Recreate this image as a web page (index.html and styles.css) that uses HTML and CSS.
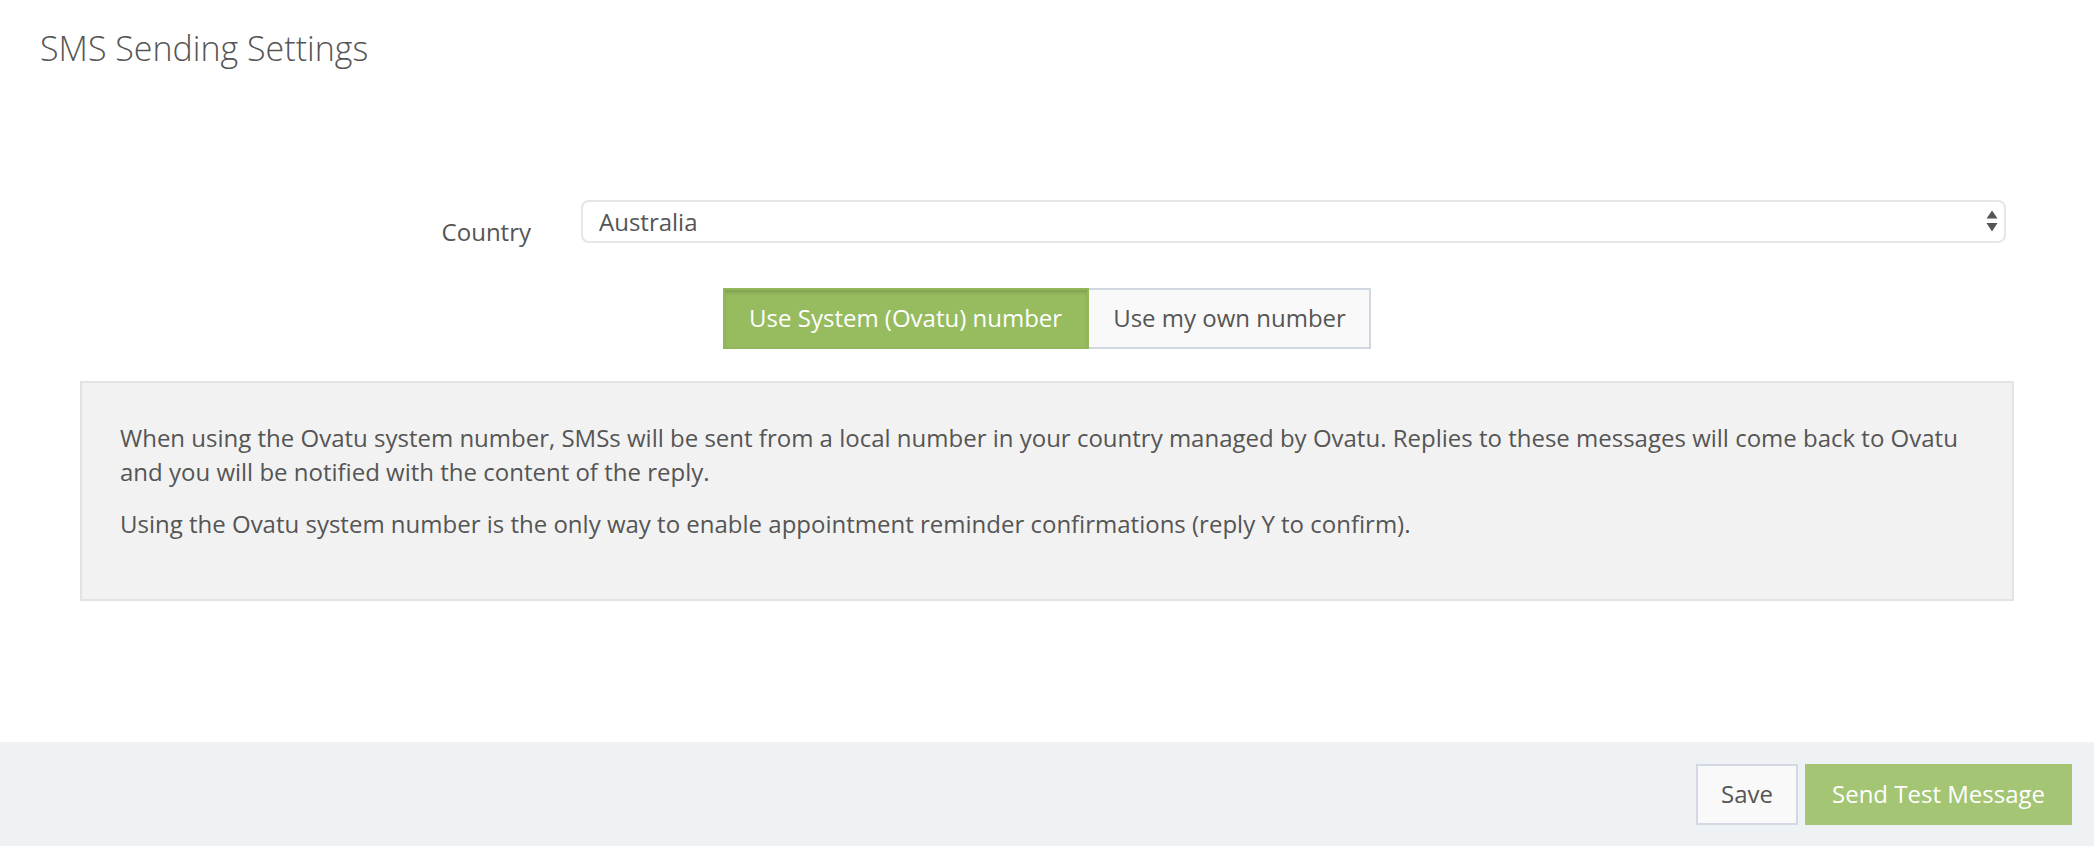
FILE: index.html
```html
<!DOCTYPE html>
<html lang="en">
<head>
<meta charset="utf-8">
<title>SMS Sending Settings</title>
<link rel="stylesheet" href="styles.css">
</head>
<body>
<div class="page">
  <header class="page-header">
    <h1 class="page-title">SMS Sending Settings</h1>
  </header>
  <main class="content">
    <div class="form-row">
      <label class="form-label" for="country">Country</label>
      <div class="select-wrap">
        <select id="country" class="form-select">
          <option>Australia</option>
        </select>
        <svg class="select-arrows" width="12" height="22" viewBox="0 0 12 22" aria-hidden="true">
          <polygon points="6,0.5 11.5,8.5 0.5,8.5" fill="#555"/>
          <polygon points="0.5,13 11.5,13 6,21.5" fill="#555"/>
        </svg>
      </div>
    </div>
    <div class="toggle-row">
      <div class="toggle-group">
        <button class="toggle-btn is-active" type="button">Use System (Ovatu) number</button>
        <button class="toggle-btn" type="button">Use my own number</button>
      </div>
    </div>
    <div class="well">
      <p>When using the Ovatu system number, SMSs will be sent from a local number in your country managed by Ovatu. Replies to these messages will come back to Ovatu and you will be notified with the content of the reply.</p>
      <p>Using the Ovatu system number is the only way to enable appointment reminder confirmations (reply Y to confirm).</p>
    </div>
  </main>
  <footer class="footer">
    <button class="btn btn-default" type="button">Save</button>
    <button class="btn btn-primary" type="button">Send Test Message</button>
  </footer>
</div>
</body>
</html>
```

FILE: styles.css
```css
* {
  box-sizing: border-box;
}

html, body {
  margin: 0;
  padding: 0;
  background: #ffffff;
}

body {
  font-family: "Open Sans", "Liberation Sans", sans-serif;
  font-size: 24px;
  line-height: 34.5px;
  color: #555555;
}

.page {
  min-height: 100vh;
  display: flex;
  flex-direction: column;
}

.page-header {
  padding: 30px 40px 0;
}

.page-title {
  margin: 0;
  font-size: 34px;
  line-height: 37.4px;
  font-weight: 300;
  color: #555555;
}

.content {
  padding: 0 80px;
  margin-top: 132.6px;
  flex: 1;
}

.form-row {
  display: grid;
  grid-template-columns: 475px 1fr;
  align-items: start;
  height: 43px;
}

.form-label {
  text-align: right;
  padding-right: 24px;
  padding-top: 14.6px;
  line-height: 34.5px;
}

.select-wrap {
  position: relative;
  margin-left: 26px;
  margin-right: 8px;
}

.form-select {
  display: block;
  width: 100%;
  height: 43px;
  margin: 0;
  padding: 0 40px 0 16px;
  border: 2px solid #e6e6e6;
  border-radius: 8px;
  background: #ffffff;
  font-family: inherit;
  font-size: 24px;
  color: #555555;
  -webkit-appearance: none;
  appearance: none;
  outline: none;
}

.select-arrows {
  position: absolute;
  right: 8px;
  top: 10px;
  pointer-events: none;
}

.toggle-row {
  display: flex;
  justify-content: center;
  margin-top: 45px;
  margin-left: -80px;
  margin-right: -80px;
}

.toggle-group {
  display: flex;
}

.toggle-btn {
  margin: 0;
  height: 61px;
  padding: 0 23px 0 24px;
  border: 2px solid #d0d7e1;
  background: #f9f9f9;
  font-family: inherit;
  font-size: 24px;
  line-height: 34.5px;
  color: #555555;
  cursor: pointer;
}

.toggle-btn + .toggle-btn {
  border-left: 0;
}

.toggle-btn.is-active {
  background: #97bb5f;
  border-color: #92b65a;
  color: #ffffff;
  padding: 0 25px 0 24px;
  box-shadow: inset 0 3px 3px rgba(0, 0, 0, 0.13);
}

.well {
  margin-top: 32px;
  background: #f2f2f2;
  border: 2px solid #e3e3e3;
  padding: 37.6px 38px 41px;
}

.well p {
  margin: 0 0 17px;
}

.footer {
  height: 104px;
  background: #eef2f5;
  display: flex;
  justify-content: flex-end;
  align-items: flex-start;
  gap: 7px;
  padding: 22px 22px 0;
}

.btn {
  margin: 0;
  height: 61px;
  padding: 0 25px;
  font-family: inherit;
  font-size: 24px;
  line-height: 34.5px;
  border: 2px solid transparent;
  cursor: pointer;
}

.btn-default {
  background: #f9f9f9;
  border-color: #d3d9e2;
  color: #555555;
  padding: 0 23px;
}

.btn-primary {
  background: #a3c574;
  border-color: #a3c574;
  color: #ffffff;
}
```
